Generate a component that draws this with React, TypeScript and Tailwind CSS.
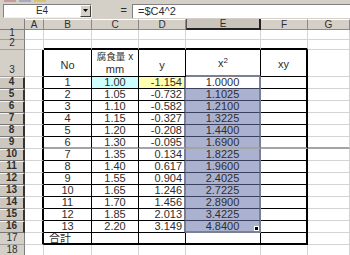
import React from "react";

const data: [string, string, string, string][] = [
  ["1", "1.00", "-1.154", "1.0000"],
  ["2", "1.05", "-0.732", "1.1025"],
  ["3", "1.10", "-0.582", "1.2100"],
  ["4", "1.15", "-0.327", "1.3225"],
  ["5", "1.20", "-0.208", "1.4400"],
  ["6", "1.30", "-0.095", "1.6900"],
  ["7", "1.35", "0.134", "1.8225"],
  ["8", "1.40", "0.617", "1.9600"],
  ["9", "1.55", "0.904", "2.4025"],
  ["10", "1.65", "1.246", "2.7225"],
  ["11", "1.70", "1.456", "2.8900"],
  ["12", "1.85", "2.013", "3.4225"],
  ["13", "2.20", "3.149", "4.8400"],
];

const cols = ["A", "B", "C", "D", "E", "F", "G"];

function cellClass(r: number, ci: number): string {
  const inTable = r >= 3 && r <= 17 && ci >= 1 && ci <= 5;
  const cls: string[] = ["relative flex items-center overflow-hidden whitespace-nowrap border-r border-b"];
  if (ci === 0 && r >= 3 && r <= 17) cls.push("border-r-2 border-r-black");
  else if (inTable && ci === 5) cls.push("border-r-2 border-r-black");
  else if (inTable && ci === 3 && r >= 4 && r <= 16) cls.push("border-r-2 border-r-[#7a7f95]");
  else if (inTable && ci === 4 && r >= 4 && r <= 16) cls.push("border-r-2 border-r-[#7a7f95]");
  else if (inTable) cls.push("border-r-black");
  else cls.push("border-r-[#d4d4d4]");
  if (r === 2 && ci >= 1 && ci <= 5) cls.push("border-b-2 border-b-black");
  else if (inTable && r === 17) cls.push("border-b-2 border-b-black");
  else if (inTable && ci === 4 && (r === 3 || r === 16)) cls.push("border-b-2 border-b-[#7a7f95]");
  else if (r === 9 && ci >= 1) cls.push("border-b-2 border-b-[#a4a4a4]");
  else if (inTable && ci === 4 && r >= 4 && r <= 16) cls.push("border-b-[#3c4060]");
  else if (inTable) cls.push("border-b-black");
  else cls.push("border-b-[#d4d4d4]");
  if (r === 4 && ci === 2) cls.push("bg-[#ccffff]");
  else if (r === 4 && ci === 3) cls.push("bg-[#ffffb0]");
  else if (ci === 4 && r >= 5 && r <= 16) cls.push("bg-[#aab2cf]");
  else cls.push("bg-white");
  if (ci === 3 && r >= 4) cls.push("justify-end pr-[2px]");
  else if (r === 17 && ci === 1) cls.push("justify-start pl-[5px]");
  else cls.push("justify-center");
  return cls.join(" ");
}

function cellContent(r: number, ci: number): React.ReactNode {
  if (r === 3) {
    if (ci === 1) return <span className="mt-[4px]">No</span>;
    if (ci === 2)
      return (
        <div className="flex flex-col items-center leading-[13px]">
          <span className="text-[9.5px]">
            腐食量<span className="text-[10px]">&nbsp;x</span>
          </span>
          <span>mm</span>
        </div>
      );
    if (ci === 3) return <span className="mt-[4px]">y</span>;
    if (ci === 4)
      return (
        <span className="mt-[2px]">
          x<sup className="text-[8px]">2</sup>
        </span>
      );
    if (ci === 5) return <span className="mt-[2px]">xy</span>;
  }
  if (r >= 4 && r <= 16 && ci >= 1 && ci <= 4) {
    return data[r - 4][ci - 1];
  }
  if (r === 17 && ci === 1) return "合計";
  return null;
}

export default function App() {
  const rows = Array.from({ length: 18 }, (_, i) => i + 1);
  return (
    <div
      className="w-[350px] h-[255px] overflow-hidden bg-[#d4d0c8] text-[11px] text-[#2e2e2e]"
      style={{ fontFamily: '"Liberation Sans", "Noto Sans CJK JP", sans-serif' }}
    >
      <div className="h-[3px] flex gap-[3px] pl-[4px]">
        <div className="w-[12px] h-[2px] bg-[#c89a9a]" />
        <div className="w-[12px] h-[2px] bg-[#a8a8c0]" />
        <div className="w-[12px] h-[2px] bg-[#d8c070]" />
      </div>
      <div className="h-[15px] flex items-center">
        <div className="ml-[3px] w-[89px] h-[14px] bg-white border border-[#808080] border-r-[#f0f0f0] border-b-[#f0f0f0] flex items-center">
          <div className="flex-1 text-center text-[10px] leading-none">E4</div>
          <div className="w-[11px] h-[12px] bg-[#d4d0c8] border border-white border-r-[#404040] border-b-[#404040] flex items-center justify-center">
            <svg width="5" height="3" viewBox="0 0 5 3">
              <path d="M0 0H5L2.5 3Z" fill="#000" />
            </svg>
          </div>
        </div>
        <div className="w-[40px] flex justify-end pr-[5px] text-[11px] leading-none">=</div>
        <div className="flex-1 h-[14px] bg-white border-l border-t border-[#808080] flex items-center pl-[5px] text-[11px] leading-none">
          =$C4^2
        </div>
      </div>
      <div className="h-[1px]" />
      <div className="grid grid-cols-[25px_19px_48px_47px_47px_75px_47px_1fr] grid-rows-[11px_10px_10px_27px_repeat(15,12px)] leading-none">
        <div className="bg-[#d4d0c8] border-r border-b border-[#808080]" />
        {cols.map((c, i) => (
          <div
            key={c}
            className={
              i === 4
                ? "flex items-center justify-center text-[10px] bg-[#c8c4bb] border-r-2 border-b-2 border-l border-[#222] border-l-[#555]"
                : "flex items-center justify-center text-[10px] bg-[#d4d0c8] border-r border-b border-[#8a8a8a] border-t border-t-white"
            }
          >
            {c}
          </div>
        ))}
        {rows.map((r) => (
          <React.Fragment key={r}>
            <div
              className={
                r >= 4 && r <= 16
                  ? "flex items-end justify-center pb-[1px] text-[10px] font-bold bg-[#ccc8bf] border-r-2 border-r-[#333] border-b border-b-[#777] border-t border-t-[#f4f4f4]"
                  : "flex items-end justify-center pb-[1px] text-[10px] bg-[#d4d0c8] border-r border-r-[#808080] border-b border-b-[#a0a0a0]"
              }
            >
              {r}
            </div>
            {cols.map((c, ci) => (
              <div key={c} className={cellClass(r, ci)}>
                {cellContent(r, ci)}
                {r === 16 && ci === 4 && (
                  <div className="absolute right-0 bottom-0 w-[5px] h-[5px] bg-black border border-white" />
                )}
              </div>
            ))}
          </React.Fragment>
        ))}
      </div>
    </div>
  );
}
